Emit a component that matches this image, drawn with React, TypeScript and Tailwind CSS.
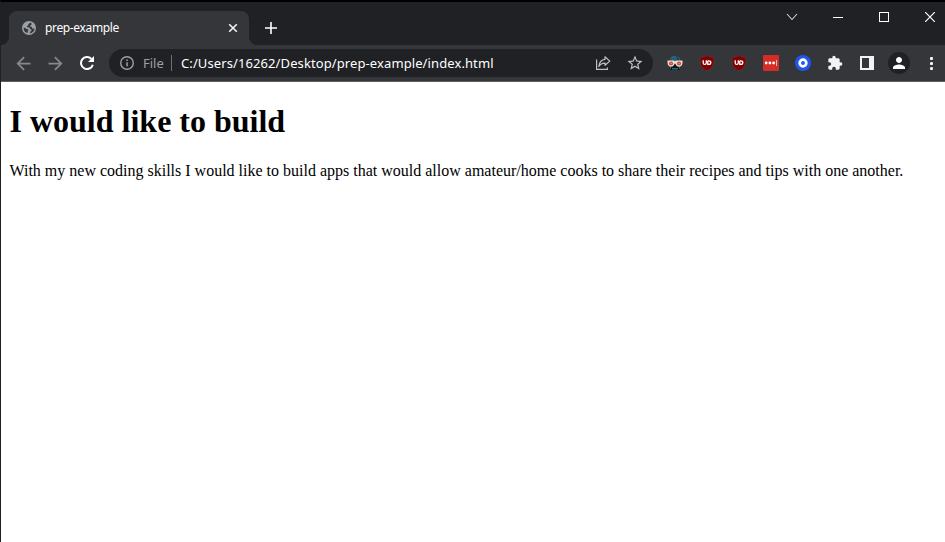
import type { ReactNode } from "react";

const UI = "font-['Noto_Sans','Open_Sans',sans-serif]";

function Slot({ children }: { children: ReactNode }) {
  return <div className="flex h-7 w-8 shrink-0 items-center justify-center">{children}</div>;
}

function Material({ d, className }: { d: string; className: string }) {
  return (
    <svg viewBox="0 0 24 24" className={`shrink-0 ${className}`} fill="currentColor">
      <path d={d} />
    </svg>
  );
}

function Shield() {
  return (
    <svg width="16" height="16" viewBox="0 0 16 16">
      <path d="M8 .4C10 1.8 12.5 2.200 14.800 2.200V7c0 4-2.600 6.800-6.800 8.700C3.800 13.800 1.200 11 1.200 7V2.200C3.500 2.200 6 1.800 8 .4Z" fill="#800000" stroke="#6a3034" strokeWidth=".7" />
      <path d="M4.200 5.200v2.700c0 1 .5 1.500 1.500 1.500s1.600-.5 1.600-1.500V5.200M8.800 5.800v3.600h1c1.300 0 2-.6 2-1.900s-.7-1.700-2-1.700h-1" fill="none" stroke="#fff" strokeWidth="1.300" />
    </svg>
  );
}

function Mask() {
  return (
    <svg width="16" height="16" viewBox="0 0 16 16">
      <path d="M2.500 8C2.500 4 4 .8 8 .8S13.500 4 13.500 8Z" fill="#2b6777" />
      <path d="M8 1l2 2-1 2 3 2V4l-2-3ZM4 4h1v1H4zM6 3h1v1H6z" fill="#194654" />
      <path d="M2.500 10h11l-.5 5H3Z" fill="#0f171d" />
      <path d="M5 13h6v1.500H5ZM3 11.500h1V14H3zM12 11.500h1V14h-1z" fill="#2b6777" />
      <path d="M.5 5.500H6.500l1.500.7 1.500-.7h6V7.500c0 2.600-1.300 4.200-3.500 4.200-1.800 0-3-1.200-3.300-3H7.300c-.3 1.800-1.500 3-3.300 3C1.800 11.700.5 10 .5 7.500Z" fill="#e8ded8" />
      <circle cx="4" cy="8.500" r="2.100" fill="#dc4930" />
      <circle cx="12" cy="8.500" r="2.100" fill="#dc4930" />
      <path d="M3.500 8h1v1h-1zM11.500 8h1v1h-1z" fill="#ffad91" />
    </svg>
  );
}

function Globe() {
  return (
    <svg width="14" height="14" viewBox="0 0 14 14" className="ml-0.5 shrink-0">
      <circle cx="7" cy="7" r="7" fill="#9aa0a6" />
      <path d="M8.300 1.600C7.900 2.600 7 2.500 6.500 3.100 6 3.700 6.600 4.200 6 4.700 5.500 5.100 5 4.800 4.800 5.400c-.2.800.9.900 1.800.9 1.300 0 1.300.9 1.400 1.500.2.700 1.300.4 1.600 1 .3.800-.6 1.200-1.100 1.600-.5.500-.4 1.500-1.200 2.100 3 0 5.200-2.300 5.200-5.200-.6 0-1 .7-1.800.5C9.800 7.500 10.500 6.500 9.700 6 9 5.600 8.200 5.800 8.100 5c0-.8.900-.7 1.300-1.200.5-.6.200-1.400-1.100-2.200ZM1.600 6.700c-.2 2.600 1.500 4.800 3.900 5.400.3-.8-.1-1.400.4-2 .4-.5.800-.9.300-1.500C5.600 8 4.800 8.300 4.200 7.700 3.600 7 2.700 6.500 1.600 6.700Z" fill="#35363a" />
    </svg>
  );
}

function TitleBar() {
  return (
    <div className="flex h-[43px] shrink-0 bg-[#202124] pl-2">
      <div className="relative mt-[9px] flex h-[34px] w-60 shrink-0 items-center rounded-t-lg bg-[#35363a] pr-[11px] pl-[11px]">
        <svg className="absolute bottom-0 -left-2" width="8" height="8">
          <path d="M8 0v8H0A8 8 0 0 0 8 0Z" fill="#35363a" />
        </svg>
        <svg className="absolute -right-2 bottom-0" width="8" height="8">
          <path d="M0 0v8h8A8 8 0 0 1 0 0Z" fill="#35363a" />
        </svg>
        <Globe />
        <span className="ml-[9px] flex-1 text-[12px] leading-4 tracking-[-0.35px] whitespace-nowrap text-white">prep-example</span>
        <svg width="10" height="10" viewBox="0 0 10 10" stroke="#f1f3f4" strokeWidth="1.600">
          <path d="M1.200 1.200l7.600 7.600M8.800 1.200l-7.600 7.600" />
        </svg>
      </div>
      <svg className="mt-5 ml-4 shrink-0" width="12" height="12" viewBox="0 0 12 12" fill="#fff">
        <path d="M5.200 0h1.600v5.200H12v1.600H6.800V12H5.200V6.800H0V5.200h5.200Z" />
      </svg>
      <div className="ml-auto -mr-2 flex h-[30px] shrink-0 text-white [&>div]:flex [&>div]:w-[46px] [&>div]:items-center [&>div]:justify-center">
        <div>
          <svg width="12" height="8" viewBox="0 0 12 8" fill="none" stroke="#d0d1d3" strokeWidth="1.100">
            <path d="M1 1l5 5.500L11 1" />
          </svg>
        </div>
        <div><span className="h-px w-[10px] bg-white" /></div>
        <div><span className="size-[10px] border border-white" /></div>
        <div>
          <svg width="10" height="10" viewBox="0 0 10 10" stroke="#fff" strokeWidth="1.200">
            <path d="M0 0l10 10M10 0L0 10" />
          </svg>
        </div>
      </div>
    </div>
  );
}

function AddressBar() {
  return (
    <div className="flex h-7 w-[544px] shrink-0 items-center rounded-full bg-[#202124] pr-[9px] pl-[10px]">
      <svg width="16" height="16" viewBox="0 0 16 16" className="shrink-0" fill="#9aa0a6">
        <circle cx="8" cy="8" r="6.300" fill="none" stroke="#9aa0a6" strokeWidth="1.400" />
        <path d="M7.300 7.200h1.500v4H7.300zM7.300 4.500h1.500V6H7.300z" />
      </svg>
      <span className="ml-2 w-[21px] text-[13px] leading-4 whitespace-nowrap text-[#9aa0a6]">File</span>
      <span className="ml-[7px] h-4 w-px bg-[#6b6e73]" />
      <span className="ml-[9px] flex-1 text-[13px] leading-4 tracking-[0.1px] whitespace-nowrap text-white">
        C:/Users/16262/Desktop/prep-example/index.html
      </span>
      <svg width="16" height="16" viewBox="0 0 16 16" fill="none" stroke="#bdc1c6" strokeWidth="1.200">
        <path d="M1.600 4.500v9.900h10.800v-2" />
        <path d="M10 1.800l4.800 4.300L10 10.300V8.200C7 8.200 5.200 9 3.800 11.500 4.200 7.500 6.200 4.700 10 4.300Z" strokeLinejoin="round" />
      </svg>
      <Material
        className="ml-[15px] size-[18px] text-[#bdc1c6]"
        d="M22 9.240l-7.190-.62L12 2 9.190 8.630 2 9.240l5.460 4.730L5.820 21 12 17.270 18.180 21l-1.630-7.030L22 9.240zM12 15.400l-3.760 2.270 1-4.280-3.320-2.880 4.380-.38L12 6.100l1.710 4.040 4.380.38-3.320 2.880 1 4.280L12 15.400z"
      />
    </div>
  );
}

function Toolbar() {
  return (
    <div className="flex h-9 shrink-0 items-center bg-[#35363a] pl-1.5">
      <Slot>
        <Material className="size-[21px] text-[#86888c]" d="M20 11H7.830l5.590-5.590L12 4l-8 8 8 8 1.410-1.410L7.830 13H20v-2z" />
      </Slot>
      <Slot>
        <Material className="size-[21px] text-[#86888c]" d="M12 4l-1.410 1.410L16.170 11H4v2h12.170l-5.580 5.590L12 20l8-8z" />
      </Slot>
      <Slot>
        <svg width="14" height="14" viewBox="0 0 14 14" className="shrink-0">
          <path d="M12.800 8.700A6 6 0 1 1 11.400 2.900" fill="none" stroke="#fff" strokeWidth="2" />
          <path d="M14 0v6H8Z" fill="#fff" />
        </svg>
      </Slot>
      <div className="w-1.5 shrink-0" />
      <AddressBar />
      <div className="w-1.5 shrink-0" />
      <Slot><Mask /></Slot>
      <Slot><Shield /></Slot>
      <Slot><Shield /></Slot>
      <Slot>
        <svg width="16" height="16" viewBox="0 0 16 16">
          <rect width="16" height="16" rx="1" fill="#d32d27" />
          <g fill="#fff"><circle cx="3.200" cy="8" r="1.400" /><circle cx="6.900" cy="8" r="1.400" /><circle cx="10.600" cy="8" r="1.400" /></g>
          <rect x="13" y="5" width="1" height="6" fill="#f5b3b0" />
        </svg>
      </Slot>
      <Slot>
        <svg width="16" height="16" viewBox="0 0 16 16">
          <circle cx="8" cy="8" r="8" fill="#1f57ec" />
          <circle cx="8" cy="8" r="3.300" fill="none" stroke="#fff" strokeWidth="2.700" />
          <rect x="7" y="7" width="2" height="2" fill="#1f57ec" />
        </svg>
      </Slot>
      <Slot>
        <Material
          className="size-[16px] text-[#f1f3f4]"
          d="M20.500 11H19V7c0-1.100-.9-2-2-2h-4V3.500C13 2.120 11.880 1 10.500 1S8 2.120 8 3.500V5H4c-1.100 0-1.990.9-1.990 2v3.800H3.500c1.490 0 2.700 1.210 2.700 2.700s-1.210 2.700-2.700 2.700H2V20c0 1.100.9 2 2 2h3.800v-1.500c0-1.490 1.210-2.700 2.700-2.700 1.490 0 2.700 1.210 2.700 2.700V22H17c1.100 0 2-.9 2-2v-4h1.500c1.380 0 2.500-1.120 2.500-2.500S21.880 11 20.500 11z"
        />
      </Slot>
      <Slot>
        <span className="h-[14px] w-[14px] border-2 border-r-[5px] border-[#f1f3f4]" />
      </Slot>
      <Slot>
        <div className="flex size-[22px] items-center justify-center rounded-full bg-[#202124]">
          <Material className="size-[18px] text-white" d="M12 12c2.210 0 4-1.790 4-4s-1.790-4-4-4-4 1.790-4 4 1.790 4 4 4zm0 2c-2.670 0-8 1.340-8 4v2h16v-2c0-2.660-5.330-4-8-4z" />
        </div>
      </Slot>
      <Slot>
        <svg width="3" height="13" viewBox="0 0 3 13" fill="#f1f3f4" className="ml-px shrink-0">
          <circle cx="1.500" cy="1.500" r="1.600" /><circle cx="1.500" cy="6.500" r="1.600" /><circle cx="1.500" cy="11.500" r="1.600" />
        </svg>
      </Slot>
    </div>
  );
}

export default function App() {
  return (
    <div className="flex h-[542px] w-[945px] flex-col overflow-hidden border-t-2 border-l border-t-black border-l-[#202124] bg-white">
      <header className={`flex flex-col overflow-hidden ${UI}`}>
        <TitleBar />
        <Toolbar />
        <div className="h-px shrink-0 bg-[#5d5e62]" />
      </header>
      <main className="pl-[8.5px] font-['Liberation_Serif',serif] text-black">
        <h1 className="mt-[21px] text-[32px] leading-[37px] font-bold">I would like to build</h1>
        <p className="mt-[22px] text-[16px] leading-[18px] whitespace-nowrap">
          With my new coding skills I would like to build apps that would allow amateur/home cooks to share their recipes and tips with one another.
        </p>
      </main>
    </div>
  );
}
